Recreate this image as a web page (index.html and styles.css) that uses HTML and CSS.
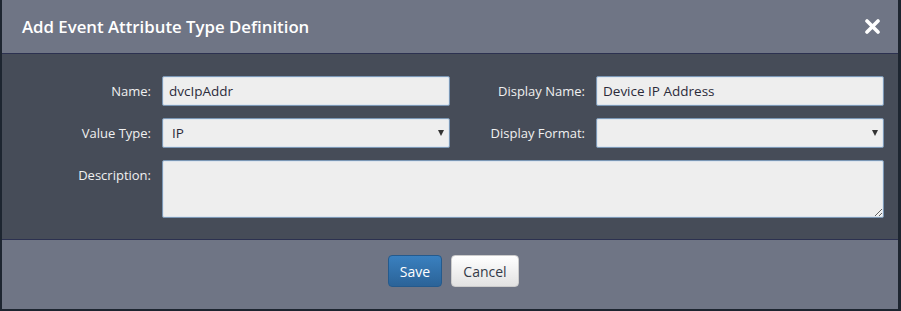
FILE: index.html
```html
<!DOCTYPE html>
<html lang="en">
<head>
<meta charset="utf-8">
<title>Add Event Attribute Type Definition</title>
<link rel="stylesheet" href="styles.css">
</head>
<body>
<div class="backdrop">
  <div class="modal">
    <div class="modal-header">
      <h4 class="modal-title">Add Event Attribute Type Definition</h4>
      <button class="close" type="button" aria-label="Close">
        <svg width="15" height="15" viewBox="0 0 15 15"><path d="M2 2 L13 13 M13 2 L2 13" stroke="#ffffff" stroke-width="3.6" stroke-linecap="round"/></svg>
      </button>
    </div>
    <div class="modal-body">
      <form class="form-grid">
        <label class="lbl">Name:</label>
        <input class="ctl" type="text" value="dvcIpAddr">
        <label class="lbl">Display Name:</label>
        <input class="ctl" type="text" value="Device IP Address">

        <label class="lbl">Value Type:</label>
        <span class="select-wrap"><select class="ctl sel"><option>IP</option></select></span>
        <label class="lbl">Display Format:</label>
        <span class="select-wrap"><select class="ctl sel"><option></option></select></span>

        <label class="lbl lbl-top">Description:</label>
        <textarea class="ctl area"></textarea>
      </form>
    </div>
    <div class="modal-footer">
      <button class="btn btn-primary" type="button">Save</button>
      <button class="btn btn-default" type="button">Cancel</button>
    </div>
  </div>
</div>
</body>
</html>
```

FILE: styles.css
```css
html, body {
  margin: 0;
  padding: 0;
  background: #1d2530;
  font-family: "Open Sans", "Noto Sans", sans-serif;
}

.backdrop {
  width: 901px;
  height: 311px;
  padding: 0 3px 0 2px;
  box-sizing: border-box;
}

.modal {
  background: #6f7585;
  width: 896px;
}

.modal-header {
  height: 54px;
  box-sizing: border-box;
  border-bottom: 1px solid #2c3150;
  display: flex;
  align-items: center;
  justify-content: space-between;
  padding: 0 18px 0 20px;
}

.modal-title {
  margin: 0;
  color: #ffffff;
  font-size: 16.8px;
  font-weight: 600;
}

.close {
  background: none;
  border: 0;
  padding: 0;
  width: 15px;
  height: 15px;
  display: flex;
  cursor: pointer;
}

.modal-body {
  background: #464c58;
  padding: 22px 14px 21px 15px;
  border-bottom: 1px solid #2c3150;
}

.form-grid {
  margin: 0;
  display: grid;
  grid-template-columns: 145px 288px 146px 288px;
  row-gap: 12px;
}

.lbl {
  color: #f0f0f0;
  font-size: 13px;
  text-align: right;
  padding-right: 11px;
  align-self: center;
}

.lbl-top {
  align-self: start;
  padding-top: 6px;
}

.ctl {
  box-sizing: border-box;
  height: 30px;
  width: 100%;
  margin: 0;
  background: #eeeeee;
  border: 1px solid #7b97b5;
  box-shadow: inset 0 0 0 1px #dfe6ee;
  border-radius: 2px;
  font-family: inherit;
  font-size: 13.5px;
  color: #2b2b3a;
  padding: 0 6px;
  outline: none;
}

.select-wrap {
  position: relative;
  display: block;
}

.sel {
  appearance: none;
  -webkit-appearance: none;
  padding-left: 9px;
}

.select-wrap::after {
  content: "";
  position: absolute;
  right: 6px;
  top: 12px;
  border-left: 3.5px solid transparent;
  border-right: 3.5px solid transparent;
  border-top: 6px solid #333333;
  pointer-events: none;
}

.area {
  grid-column: 2 / 5;
  height: 58px;
  resize: both;
}

.modal-footer {
  padding: 15px 0 22px;
  display: flex;
  justify-content: center;
  gap: 9px;
  padding-left: 7px;
}

.btn {
  height: 32px;
  box-sizing: border-box;
  border-radius: 4px;
  font-family: inherit;
  font-size: 14px;
  padding: 0;
  cursor: pointer;
}

.btn-primary {
  width: 54px;
  color: #ffffff;
  background: linear-gradient(#3a80bf, #2b6398);
  border: 1px solid #245a8d;
}

.btn-default {
  width: 68px;
  color: #333a48;
  background: linear-gradient(#ffffff, #e2e2e2);
  border: 1px solid #cccccc;
}
```
